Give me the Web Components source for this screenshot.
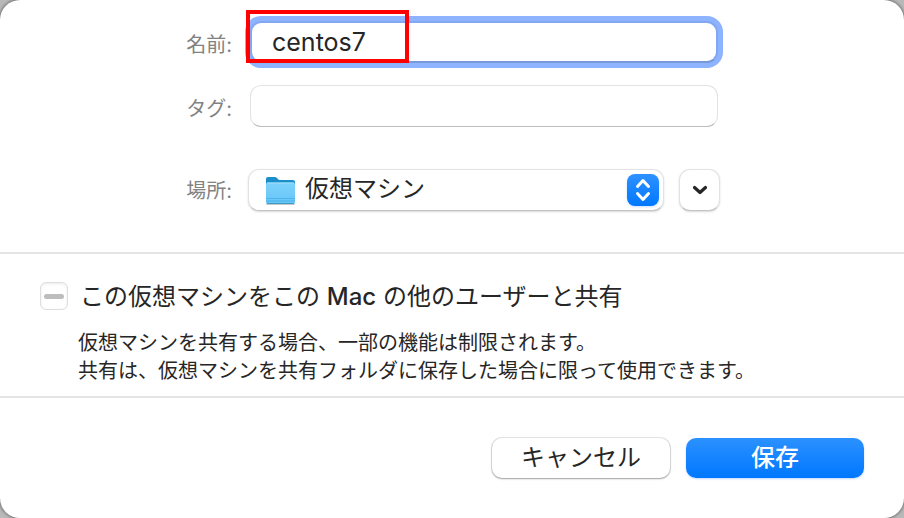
<!DOCTYPE html>
<html lang="ja">
<head>
<meta charset="utf-8">
<title>仮想マシンを保存</title>
<style>
  html { height: 100%; }
  body {
    margin: 0;
    min-height: 100%;
    display: flex;
    background: #b9b9b9;
    color: #262626;
    font-family: Inter, "Noto Sans CJK JP", sans-serif;
    font-size: 24px;
  }
  .latin { font-weight: 500; }
</style>
</head>
<body>
<sheet-panel>
  <text-field label="名前:" value="centos7" focused highlighted></text-field>
  <text-field label="タグ:"></text-field>
  <location-picker label="場所:" value="仮想マシン"></location-picker>
  <share-option slot="share">
    <span slot="label">この仮想マシンをこの <span class="latin">Mac</span> の他のユーザーと共有</span>
    仮想マシンを共有する場合、一部の機能は制限されます。<br>共有は、仮想マシンを共有フォルダに保存した場合に限って使用できます。
  </share-option>
  <push-button slot="actions">キャンセル</push-button>
  <push-button slot="actions" primary>保存</push-button>
</sheet-panel>

<script>
class BaseElement extends HTMLElement {
  connectedCallback() {
    if (this.shadowRoot) return;
    this.attachShadow({ mode: 'open' }).innerHTML =
      `<style>*, *::before { box-sizing: border-box; }</style>` + this.render();
    this.ready();
  }
  attr(name) { return this.getAttribute(name) || ''; }
  ready() {}
}

customElements.define('sheet-panel', class extends BaseElement {
  render() {
    return `<style>
      :host { display: flex; flex-direction: column; flex: 1; background: #fff; border-radius: 20px; box-shadow: 0 0 3px 1px rgba(0,0,0,.4); overflow: hidden; }
      .form { display: flex; flex-direction: column; gap: 22px; padding: 21px 0 41px; }
      .share { border: solid #e4e4e4; border-width: 2px 0; padding: 28px 40px 11px; }
      .actions { display: flex; justify-content: flex-end; gap: 16px; padding: 40px; }
    </style>
    <section class="form"><slot></slot></section>
    <section class="share"><slot name="share"></slot></section>
    <footer class="actions"><slot name="actions"></slot></footer>`;
  }
});

const labelStyle = `
  label { width: 232px; flex: none; text-align: right; font-size: 20px; line-height: 28px; color: #828282; }`;

customElements.define('text-field', class extends BaseElement {
  render() {
    return `<style>
      :host { display: flex; align-items: center; gap: 18px; padding-right: 186px; }
      ${labelStyle}
      label { padding-top: 5px; }
      .box { position: relative; flex: 1; display: flex; }
      input {
        flex: 1; min-width: 0; height: 42px; padding: 0 20px; margin: 0; outline: none;
        border: 1px solid #e3e3e3; border-bottom-color: #bdbdbd; border-radius: 11px;
        background: #fff; color: inherit; font: inherit; font-size: 25px;
      }
      :host([focused]) input { border: 2px solid #82a7f3; border-bottom-color: #7898dc; box-shadow: 0 0 0 5px #8eb3ff; }
      .mark { position: absolute; left: -4px; top: -11px; width: 163px; height: 53px; border: 4px solid #f00; pointer-events: none; }
    </style>
    <label for="field">${this.attr('label')}</label>
    <div class="box">
      <input id="field" type="text" value="${this.attr('value')}">
      ${this.hasAttribute('highlighted') ? '<div class="mark"></div>' : ''}
    </div>`;
  }
});

customElements.define('location-picker', class extends BaseElement {
  render() {
    return `<style>
      :host { display: flex; align-items: center; padding-right: 184px; margin-top: 20px; }
      ${labelStyle}
      label { padding-top: 2px; }
      .box { position: relative; flex: 1; display: flex; margin: 0 15px 0 16px; }
      select, button {
        appearance: none; height: 42px; margin: 0; border: 1px solid #e3e3e3; border-bottom-color: #c4c4c4;
        border-radius: 11px; background: #fff; color: inherit; font: inherit; box-shadow: 0 1px 2px rgba(0,0,0,.16);
      }
      select { flex: 1; min-width: 0; padding: 0 40px 3px 56px; }
      button { width: 41px; padding: 0; display: grid; place-items: center; }
      .folder { position: absolute; left: 17px; top: 7px; pointer-events: none; }
      .arrows { position: absolute; right: 5px; top: 5px; pointer-events: none; filter: drop-shadow(0 1px 1px rgba(0,90,255,.2)); }
    </style>
    <label for="place">${this.attr('label')}</label>
    <div class="box">
      <select id="place"><option>${this.attr('value')}</option></select>
      <svg class="folder" width="32" height="32" viewBox="0 0 32 32" aria-hidden="true">
        <defs>
          <linearGradient id="front" x2="0" y2="1"><stop stop-color="#7dd2fb"/><stop offset="1" stop-color="#66c4f8"/></linearGradient>
        </defs>
        <path d="M1 27.500H30V28Q30 29 28 29H3Q1 29 1 28Z" fill="#999" opacity=".55"/>
        <path d="M1 3Q1 1 3 1H10Q11.500 1 12.500 2.500Q13.500 4 15 4H28Q30 4 30 6V12H1Z" fill="#1c8ec9"/>
        <path d="M1 8Q1 6.500 3 6.500H28Q30 6.500 30 8V26Q30 28 28 28H3Q1 28 1 26Z" fill="url(#front)"/>
        <path d="M2 7H29" stroke="#a0e0ff"/>
        <path d="M1 22.500H30M1 25H30" stroke="#47aee5" stroke-width=".8"/>
        <path d="M2 27.500H29" stroke="#3b9bcb"/>
      </svg>
      <svg class="arrows" width="32" height="32" viewBox="0 0 32 32" aria-hidden="true">
        <defs><linearGradient id="blue" x2="0" y2="1"><stop stop-color="#2f91ff"/><stop offset="1" stop-color="#0078ff"/></linearGradient></defs>
        <rect width="32" height="32" rx="8" fill="url(#blue)"/>
        <path d="M10.500 12.500L16 6.500L21.500 12.500M10.500 19.500L16 25.500L21.500 19.500" fill="none" stroke="#fff" stroke-width="3" stroke-linecap="round" stroke-linejoin="round"/>
      </svg>
    </div>
    <button type="button" aria-label="場所を展開">
      <svg width="16" height="10" viewBox="0 0 16 10" aria-hidden="true"><path d="M2.500 2.500L8 7.500L13.500 2.500" fill="none" stroke="#262626" stroke-width="3.200" stroke-linecap="round" stroke-linejoin="round"/></svg>
    </button>`;
  }
});

customElements.define('share-option', class extends BaseElement {
  render() {
    return `<style>
      :host { display: block; }
      .row { display: flex; align-items: center; gap: 12px; }
      input {
        appearance: none; flex: none; width: 28px; height: 28px; margin: 0; display: grid; place-items: center;
        border: 1px solid #dedede; border-radius: 6px; background: #fff; box-shadow: inset 0 1px 3px rgba(0,0,0,.08);
      }
      input:indeterminate::before { content: ""; width: 20px; height: 5px; border-radius: 3px; background: #bdbdbd; }
      label { line-height: 26px; padding-top: 2px; }
      p { margin: 19px 0 0 38px; font-size: 20px; line-height: 28px; }
    </style>
    <div class="row"><input id="share" type="checkbox"><label for="share"><slot name="label"></slot></label></div>
    <p><slot></slot></p>`;
  }
  ready() { this.shadowRoot.getElementById('share').indeterminate = true; }
});

customElements.define('push-button', class extends BaseElement {
  render() {
    return `<style>
      :host { display: block; }
      button {
        width: 178px; height: 40px; margin: 0; padding: 0 0 5px; border: 0; border-radius: 10px;
        background: #fff; color: inherit; font: inherit;
        box-shadow: 0 0 0 1px rgba(0,0,0,.1), 0 1px 2px rgba(0,0,0,.3);
      }
      :host([primary]) button {
        background: linear-gradient(#2b91ff, #0077ff); color: #fff; font-weight: 500;
        box-shadow: 0 1px 2px rgba(0,100,255,.25);
      }
    </style>
    <button type="button"><slot></slot></button>`;
  }
});
</script>
</body>
</html>
